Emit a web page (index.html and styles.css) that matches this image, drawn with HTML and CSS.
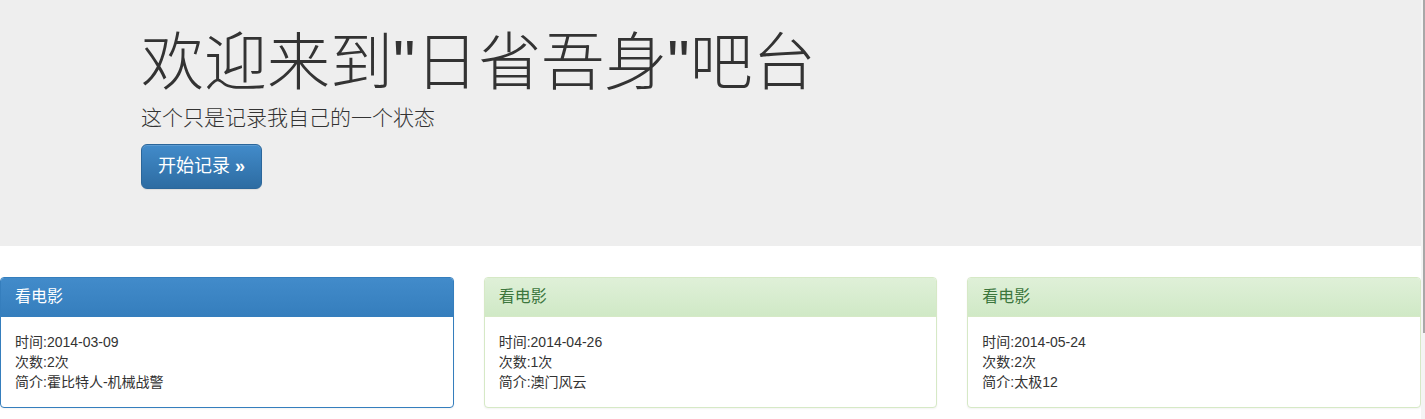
FILE: index.html
```html
<!DOCTYPE html>
<html lang="zh-CN">
<head>
<meta charset="utf-8">
<title>日省吾身</title>
<link rel="stylesheet" href="styles.css">
</head>
<body>
<div class="page">
  <div class="jumbotron">
    <div class="jumbo-inner">
      <h1 class="jumbo-title">欢迎来到"日省吾身"吧台</h1>
      <p class="jumbo-lead">这个只是记录我自己的一个状态</p>
      <p class="jumbo-action"><a class="btn-primary-lg" href="#">开始记录 <b class="raquo">&raquo;</b></a></p>
    </div>
  </div>
  <div class="panels">
    <div class="panel panel-primary">
      <div class="panel-heading"><h3 class="panel-title">看电影</h3></div>
      <div class="panel-body">
        <div>时间:2014-03-09</div>
        <div>次数:2次</div>
        <div>简介:霍比特人-机械战警</div>
      </div>
    </div>
    <div class="panel panel-success">
      <div class="panel-heading"><h3 class="panel-title">看电影</h3></div>
      <div class="panel-body">
        <div>时间:2014-04-26</div>
        <div>次数:1次</div>
        <div>简介:澳门风云</div>
      </div>
    </div>
    <div class="panel panel-success">
      <div class="panel-heading"><h3 class="panel-title">看电影</h3></div>
      <div class="panel-body">
        <div>时间:2014-05-24</div>
        <div>次数:2次</div>
        <div>简介:太极12</div>
      </div>
    </div>
  </div>
</div>
<div class="scrollbar"><div class="scrollbar-thumb"></div></div>
</body>
</html>
```

FILE: styles.css
```css
html, body {
  margin: 0;
  padding: 0;
  background: #fff;
}
body {
  font-family: "Liberation Sans", Arial, "Noto Sans CJK SC", sans-serif;
  font-size: 14px;
  line-height: 20px;
  color: #333;
  overflow: hidden;
}
.page {
  width: 1421px;
}
.jumbotron {
  background: #eee;
  height: 246px;
  box-sizing: border-box;
  padding-top: 28px;
  margin-bottom: 31px;
}
.jumbo-inner {
  padding-left: 141px;
}
.jumbo-title {
  margin: 0;
  font-size: 63px;
  line-height: 69px;
  font-weight: 300;
  color: #333;
  font-family: "Liberation Sans", "Noto Sans CJK SC", sans-serif;
}
.jumbo-lead {
  margin: 6px 0 11px 0;
  font-size: 21px;
  line-height: 30px;
  font-weight: 300;
}
.jumbo-action {
  margin: 0;
}
.btn-primary-lg {
  display: inline-block;
  box-sizing: border-box;
  height: 45px;
  padding: 0 16px;
  font-size: 18px;
  line-height: 43px;
  color: #fff;
  text-decoration: none;
  border: 1px solid #2b669a;
  border-radius: 6px;
  background: linear-gradient(to bottom, #428bca 0%, #2d6ca2 100%);
  box-shadow: inset 0 1px 0 rgba(255,255,255,.15), 0 1px 1px rgba(0,0,0,.075);
}
.raquo {
  font-weight: 700;
}
.panels {
  display: flex;
  gap: 30px;
}
.panel {
  flex: 1 1 0;
  border: 1px solid #ddd;
  border-radius: 4px;
  background: #fff;
  box-shadow: 0 1px 2px rgba(0,0,0,.05);
  margin-bottom: 20px;
}
.panel-heading {
  padding: 10px 14px;
  border-bottom: 1px solid transparent;
  border-radius: 3px 3px 0 0;
}
.panel-title {
  margin: 0;
  font-size: 16px;
  line-height: 17.6px;
  font-weight: 400;
}
.panel-body {
  padding: 15px 14px;
}
.panel-primary {
  border-color: #357ebd;
}
.panel-primary .panel-heading {
  color: #fff;
  background: linear-gradient(to bottom, #428bca 0%, #357ebd 100%);
  border-bottom-color: #357ebd;
}
.panel-success {
  border-color: #d6e9c6;
}
.panel-success .panel-heading {
  color: #3c763d;
  background: linear-gradient(to bottom, #dff0d8 0%, #d0e9c6 100%);
  border-bottom-color: #d6e9c6;
}
.scrollbar {
  position: fixed;
  top: 0;
  right: 0;
  width: 4px;
  height: 100%;
  background: #f4f4f4;
}
.scrollbar-thumb {
  margin-left: 2px;
  width: 2px;
  height: 333px;
  background: #a8a8a8;
}
```
